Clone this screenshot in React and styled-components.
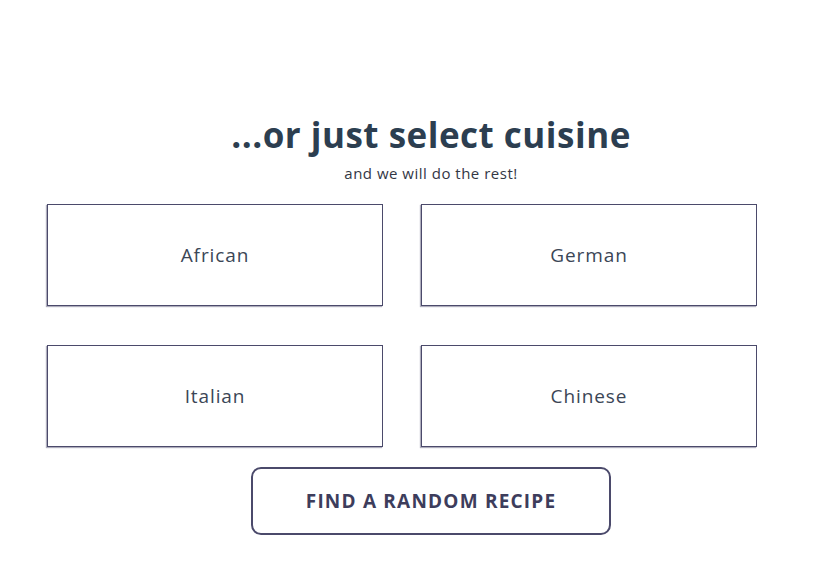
import styled, { createGlobalStyle } from 'styled-components';

const cuisines = ['African', 'German', 'Italian', 'Chinese'];

export default function App() {
  return (
    <>
      <GlobalStyle />
      <Section>
        <Header>
          <Title>...or just select cuisine</Title>
          <Subtitle>and we will do the rest!</Subtitle>
        </Header>
        <Grid>
          {cuisines.map((name) => (
            <Card key={name} type="button">
              {name}
            </Card>
          ))}
        </Grid>
        <RandomButton type="button">FIND A RANDOM RECIPE</RandomButton>
      </Section>
    </>
  );
}

const GlobalStyle = createGlobalStyle`
  body {
    margin: 0;
    background: #ffffff;
    font-family: "Open Sans", "Liberation Sans", sans-serif;
  }
`;

const Section = styled.section`
  display: flex;
  flex-direction: column;
  align-items: center;
  width: 768px;
  padding: 111px 24px 0 47px;
`;

const Header = styled.div`
  display: flex;
  flex-direction: column;
  align-items: center;
  gap: 4px;
  margin-bottom: 21px;
`;

const Title = styled.h2`
  margin: 0;
  font-size: 35px;
  font-weight: 700;
  line-height: 48px;
  letter-spacing: 0.5px;
  color: #2c3e50;
`;

const Subtitle = styled.p`
  margin: 0;
  font-size: 15px;
  line-height: 20px;
  letter-spacing: 0.5px;
  color: #333745;
`;

const Grid = styled.div`
  align-self: flex-start;
  display: grid;
  grid-template-columns: repeat(2, 336px);
  column-gap: 38px;
  row-gap: 39px;
`;

const Card = styled.button`
  height: 102px;
  border: 1px solid #4b4a6b;
  box-shadow: -1px 1px 1px rgba(75, 74, 107, 0.45);
  background: #ffffff;
  font-family: inherit;
  font-size: 19px;
  letter-spacing: 0.9px;
  color: #3b4656;
  cursor: pointer;
`;

const RandomButton = styled.button`
  width: 360px;
  height: 68px;
  margin-top: 20px;
  border: 2px solid #4b4a6b;
  border-radius: 10px;
  background: #ffffff;
  font-family: inherit;
  font-size: 19px;
  font-weight: 700;
  letter-spacing: 1.2px;
  color: #3d3d5c;
  cursor: pointer;
`;
